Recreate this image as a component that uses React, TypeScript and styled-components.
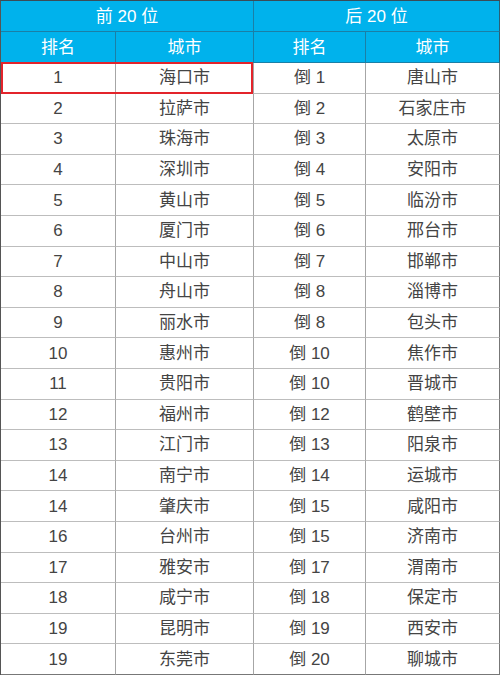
import styled, { createGlobalStyle } from 'styled-components'

const GlobalStyle = createGlobalStyle`
  html, body {
    margin: 0;
    padding: 0;
    background: #fff;
  }
`

const top = [
  ['1', '海口市'],
  ['2', '拉萨市'],
  ['3', '珠海市'],
  ['4', '深圳市'],
  ['5', '黄山市'],
  ['6', '厦门市'],
  ['7', '中山市'],
  ['8', '舟山市'],
  ['9', '丽水市'],
  ['10', '惠州市'],
  ['11', '贵阳市'],
  ['12', '福州市'],
  ['13', '江门市'],
  ['14', '南宁市'],
  ['14', '肇庆市'],
  ['16', '台州市'],
  ['17', '雅安市'],
  ['18', '咸宁市'],
  ['19', '昆明市'],
  ['19', '东莞市'],
]

const bottom = [
  ['倒 1', '唐山市'],
  ['倒 2', '石家庄市'],
  ['倒 3', '太原市'],
  ['倒 4', '安阳市'],
  ['倒 5', '临汾市'],
  ['倒 6', '邢台市'],
  ['倒 7', '邯郸市'],
  ['倒 8', '淄博市'],
  ['倒 8', '包头市'],
  ['倒 10', '焦作市'],
  ['倒 10', '晋城市'],
  ['倒 12', '鹤壁市'],
  ['倒 13', '阳泉市'],
  ['倒 14', '运城市'],
  ['倒 15', '咸阳市'],
  ['倒 15', '济南市'],
  ['倒 17', '渭南市'],
  ['倒 18', '保定市'],
  ['倒 19', '西安市'],
  ['倒 20', '聊城市'],
]

const COLS = '115px 138px 112px 134px'

const Table = styled.div`
  display: grid;
  grid-template-columns: ${COLS};
  grid-template-rows: 31px 31px repeat(20, 30.6px);
  width: 500px;
  box-sizing: border-box;
  border-top: 1px solid #3b4c57;
  border-left: 1px solid #555;
  font-family: 'Liberation Sans', 'Noto Sans CJK SC', sans-serif;
`

const Cell = styled.div<{ $head?: boolean; $span?: number }>`
  display: flex;
  align-items: center;
  justify-content: center;
  box-sizing: border-box;
  grid-column: span ${(p) => p.$span ?? 1};
  font-size: 17px;
  line-height: 20px;
  padding-top: 1px;
  color: ${(p) => (p.$head ? '#fff' : '#444')};
  background: ${(p) => (p.$head ? '#00b2ec' : '#fff')};
  border-right: 1px solid ${(p) => (p.$head ? '#1b7fa6' : '#a6a6a6')};
  border-bottom: 1px solid ${(p) => (p.$head ? '#1b7fa6' : '#bdbdbd')};
`

const LastCell = styled(Cell)`
  border-right-color: ${(p) => (p.$head ? '#2a5f75' : '#777')};
`

const Highlight = styled.div`
  grid-column: span 2;
  display: grid;
  grid-template-columns: 115px 138px;
  position: relative;
  &::after {
    content: '';
    position: absolute;
    left: 0;
    top: -1px;
    right: 1px;
    bottom: 0;
    border: 2px solid #e3242b;
    pointer-events: none;
  }
`

export default function App() {
  return (
    <>
      <GlobalStyle />
      <Table>
        <Cell $head $span={2}>前 20 位</Cell>
        <LastCell $head $span={2}>后 20 位</LastCell>
        <Cell $head>排名</Cell>
        <Cell $head>城市</Cell>
        <Cell $head>排名</Cell>
        <LastCell $head>城市</LastCell>
        {top.map(([rank, city], i) => {
          const [rank2, city2] = bottom[i]
          const last = i === top.length - 1
          const lastStyle = last ? { borderBottomColor: '#777' } : undefined
          const left =
            i === 0 ? (
              <Highlight key={`h${i}`}>
                <Cell>{rank}</Cell>
                <Cell>{city}</Cell>
              </Highlight>
            ) : (
              [
                <Cell key={`a${i}`} style={lastStyle}>{rank}</Cell>,
                <Cell key={`b${i}`} style={lastStyle}>{city}</Cell>,
              ]
            )
          return [
            left,
            <Cell key={`c${i}`} style={lastStyle}>{rank2}</Cell>,
            <LastCell key={`d${i}`} style={lastStyle}>{city2}</LastCell>,
          ]
        })}
      </Table>
    </>
  )
}
